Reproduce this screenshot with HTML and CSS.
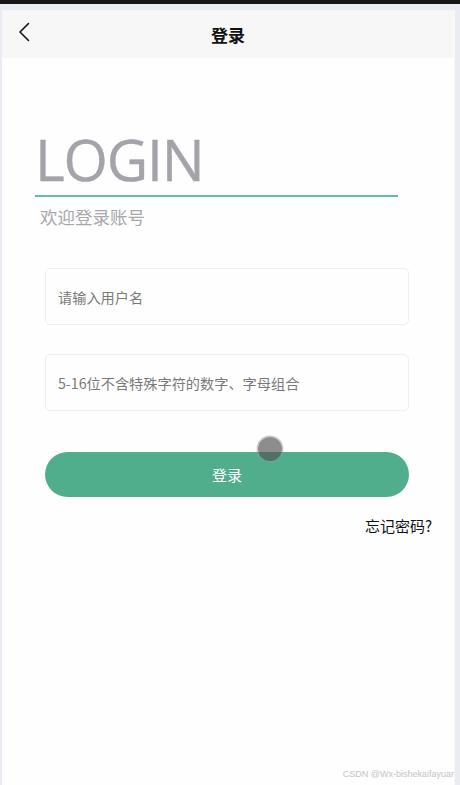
FILE: index.html
```html
<!DOCTYPE html>
<html lang="zh">
<head>
<meta charset="utf-8">
<link rel="stylesheet" href="styles.css">
</head>
<body>
<div class="topbar"></div>
<div class="shell">
  <div class="app">
    <header class="nav">
      <svg class="back" width="14" height="20" viewBox="0 0 14 20"><path d="M11.5 1.5 L3 10 L11.5 18.5" fill="none" stroke="#111" stroke-width="1.6" stroke-linecap="round" stroke-linejoin="round"/></svg>
      <h1 class="nav-title">登录</h1>
    </header>
    <main class="content">
      <div class="hero">
        <div class="hero-title">LOGIN</div>
        <div class="hero-line"></div>
        <div class="hero-sub">欢迎登录账号</div>
      </div>
      <form class="form">
        <div class="field"><span class="ph">请输入用户名</span></div>
        <div class="field"><span class="ph">5-16位不含特殊字符的数字、字母组合</span></div>
        <div class="btn-wrap">
          <button type="button" class="btn">登录</button>
          <span class="touch"></span>
        </div>
      </form>
      <div class="forgot">忘记密码?</div>
      <div class="spacer"></div>
      <div class="watermark">CSDN @Wx-bishekaifayuar</div>
    </main>
  </div>
</div>
</body>
</html>
```
FILE: styles.css
```css
* { box-sizing: border-box; margin: 0; padding: 0; }
html, body { height: 100%; }
body {
  background: #e4e9f1;
  font-family: "Noto Sans CJK SC", "Open Sans", sans-serif;
  overflow: hidden;
}
.topbar { height: 4px; background: #161616; }
.shell {
  height: 781px;
  padding: 6px 5px 0 2px;
  background: #e9edf3;
}
.app {
  height: 100%;
  background: #fefefe;
  display: flex;
  flex-direction: column;
  border-right: 1px solid #f7f8fb;
}
.nav {
  height: 48px;
  background: #f7f7f7;
  display: flex;
  align-items: center;
  justify-content: center;
  position: relative;
}
.back { position: absolute; left: 15px; top: 12px; }
.nav-title { font-size: 17px; font-weight: 700; color: #111; }
.content { flex: 1; display: flex; flex-direction: column; }
.hero { padding: 66px 0 0 33px; }
.hero-title {
  font-family: "Open Sans", sans-serif;
  font-size: 57px;
  line-height: 71px;
  color: #a3a3aa;
  letter-spacing: -1.2px;
  -webkit-text-stroke: 0.4px #a3a3aa;
}
.hero-line { width: 363px; height: 2px; background: #66bba3; }
.hero-sub { font-size: 17.5px; color: #a8a8ab; margin: 9px 0 0 5px; line-height: 22px; }
.form { padding: 40px 0 0 43px; width: 407px; display: flex; flex-direction: column; gap: 29px; }
.field {
  height: 57px;
  border: 1px solid #efefef;
  border-radius: 5px;
  display: flex;
  align-items: center;
  padding-left: 12px;
}
.ph { font-size: 14.2px; color: #7a7a7a; }
.btn-wrap { position: relative; margin-top: 12px; }
.btn {
  width: 100%;
  height: 45px;
  border: none;
  border-radius: 23px;
  background: #50ae8d;
  color: #fff;
  font-family: "Noto Sans CJK SC", sans-serif;
  font-size: 15px;
}
.touch {
  position: absolute;
  left: 213px;
  top: -15px;
  width: 24px;
  height: 24px;
  border-radius: 50%;
  background: rgba(80, 80, 80, 0.65);
  box-shadow: 0 0 0 1.5px rgba(150,150,150,0.5);
}
.forgot { align-self: flex-end; font-size: 15px; color: #111; margin: 18px 22px 0 0; }
.spacer { flex: 1; }
.watermark {
  align-self: flex-end;
  font-family: "Liberation Sans", sans-serif;
  font-size: 9px;
  color: #c4c4c8;
  margin: 0 0 6px 0;
}
```
